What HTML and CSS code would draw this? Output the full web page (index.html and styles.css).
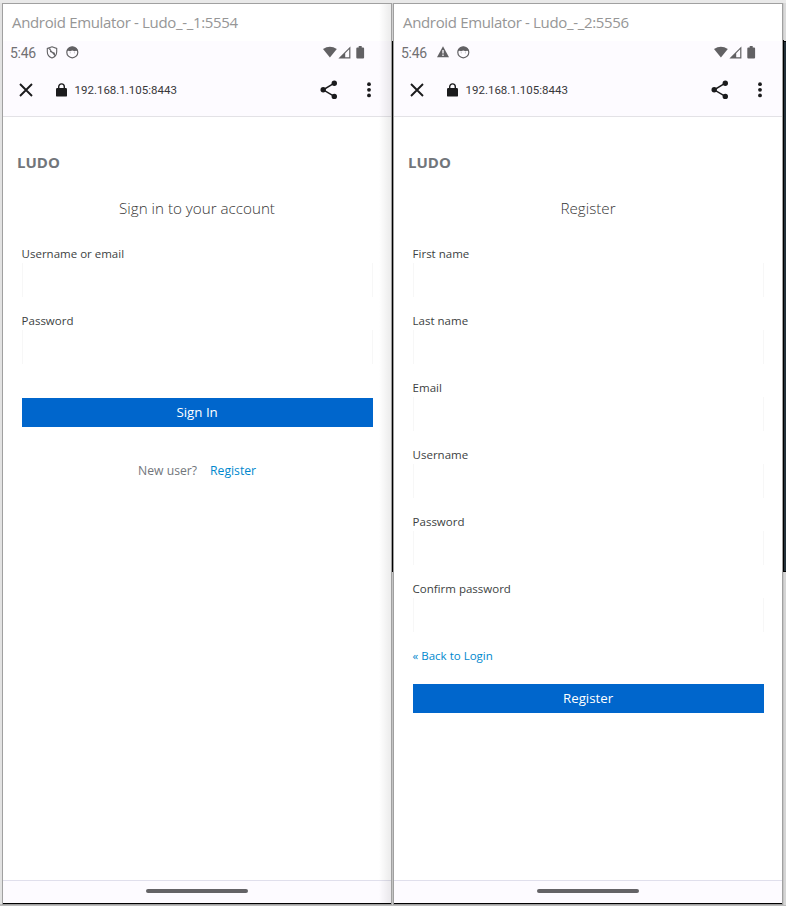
FILE: index.html
```
<!DOCTYPE html>
<html lang="en">
<head>
<meta charset="utf-8">
<title>Android Emulators</title>
<link rel="stylesheet" href="styles.css">
</head>
<body>
<svg width="0" height="0" class="defs" aria-hidden="true">
  <symbol id="close" viewBox="0 0 14 14"><path d="M1 1L13 13M13 1L1 13" stroke="#1b1b1d" stroke-width="1.9" fill="none"/></symbol>
  <symbol id="lock" viewBox="0 0 11 14"><path d="M2.7 6V3.7a2.8 2.8 0 0 1 5.600 0V6" fill="none" stroke="#1b1b1d" stroke-width="1.4"/><rect y="5" width="11" height="8.6" rx="1.2" fill="#1b1b1d"/></symbol>
  <symbol id="share" viewBox="0 0 18 20"><path d="M14.3 3.2L3.2 9.8l11.1 6.6" fill="none" stroke="#1b1b1d" stroke-width="1.5"/><circle cx="14.3" cy="3.2" r="2.7" fill="#1b1b1d"/><circle cx="3.2" cy="9.8" r="2.7" fill="#1b1b1d"/><circle cx="14.3" cy="16.4" r="2.7" fill="#1b1b1d"/></symbol>
  <symbol id="more" viewBox="0 0 4 16"><circle cx="2" cy="2.2" r="1.9" fill="#1b1b1d"/><circle cx="2" cy="7.8" r="1.9" fill="#1b1b1d"/><circle cx="2" cy="13.4" r="1.9" fill="#1b1b1d"/></symbol>
  <symbol id="signals" viewBox="0 0 42 14"><g fill="#626164"><path d="M0 3Q6.9-1.7 13.8 3L6.9 11.400z"/><path d="M15.400 12.400L27.400.4v12zM22.200 11.200h4V3.300l-4 4z" fill-rule="evenodd"/><path d="M35.700 1.500V0h3v1.500h1.400a1 1 0 0 1 1 1v8.900a1 1 0 0 1-1 1h-5.800a1 1 0 0 1-1-1V2.500a1 1 0 0 1 1-1z"/></g></symbol>
  <symbol id="shield" viewBox="0 0 12 13"><path d="M6 .8l4.700 1.600v3.300c0 3-1.900 5.300-4.700 6.300-2.800-1-4.700-3.300-4.700-6.300V2.400zM2.600 2L9.300 10M4 2.500L4.600 5.500L8.300 7.200L8.600 9.500" fill="none" stroke="#626164" stroke-width="1.100"/></symbol>
  <symbol id="warning" viewBox="0 0 12 12"><path d="M6 .3L12 11.300H0z" fill="#626164"/><path d="M6 4v3.500M6 8.600v1.400" stroke="#fdfbff" stroke-width="1.300"/></symbol>
  <symbol id="face" viewBox="0 0 13 13"><circle cx="6.300" cy="6.300" r="5.500" fill="none" stroke="#626164" stroke-width="1.200"/><path d="M.7 5.200C1.500-.9 11.100-.9 11.900 5.200L10 4.700 8.600 5.200 6.300 4.500 4 5.200 2.600 4.700z" fill="#626164"/><circle cx="4.200" cy="6.800" r=".5" fill="#a09fa3"/><circle cx="8.400" cy="6.800" r=".5" fill="#a09fa3"/></symbol>
</svg>
<main class="desktop">
  <section class="window shaded">
    <header class="titlebar"><span class="caption">Android Emulator - Ludo_-_1:5554</span></header>
    <div class="chrome">
      <div class="status"><span class="time">5:46</span><svg class="shield"><use href="#shield"/></svg><svg class="face"><use href="#face"/></svg><svg class="signals"><use href="#signals"/></svg></div>
      <div class="toolbar"><svg class="close"><use href="#close"/></svg><svg class="lock"><use href="#lock"/></svg><span class="url">192.168.1.105:8443</span><svg class="share"><use href="#share"/></svg><svg class="more"><use href="#more"/></svg></div>
    </div>
    <div class="page">
      <div class="brand"><span>LUDO</span></div>
      <h1 class="heading">Sign in to your account</h1>
      <form class="form">
        <div class="field"><label for="l1">Username or email</label><input id="l1"></div>
        <div class="field"><label for="l2">Password</label><input id="l2" type="password"></div>
        <button class="submit login" type="button">Sign In</button>
        <p class="signup"><span>New user?</span><a href="#">Register</a></p>
      </form>
    </div>
    <footer class="nav"><div class="handle"></div></footer>
  </section>
  <div class="gap"></div>
  <section class="window">
    <header class="titlebar"><span class="caption">Android Emulator - Ludo_-_2:5556</span></header>
    <div class="chrome">
      <div class="status"><span class="time">5:46</span><svg class="warning"><use href="#warning"/></svg><svg class="face"><use href="#face"/></svg><svg class="signals"><use href="#signals"/></svg></div>
      <div class="toolbar"><svg class="close"><use href="#close"/></svg><svg class="lock"><use href="#lock"/></svg><span class="url">192.168.1.105:8443</span><svg class="share"><use href="#share"/></svg><svg class="more"><use href="#more"/></svg></div>
    </div>
    <div class="page">
      <div class="brand"><span>LUDO</span></div>
      <h1 class="heading">Register</h1>
      <form class="form">
        <div class="field"><label for="r1">First name</label><input id="r1"></div>
        <div class="field"><label for="r2">Last name</label><input id="r2"></div>
        <div class="field"><label for="r3">Email</label><input id="r3"></div>
        <div class="field"><label for="r4">Username</label><input id="r4"></div>
        <div class="field"><label for="r5">Password</label><input id="r5" type="password"></div>
        <div class="field"><label for="r6">Confirm password</label><input id="r6" type="password"></div>
        <a class="back" href="#">« Back to Login</a>
        <button class="submit" type="button">Register</button>
      </form>
    </div>
    <footer class="nav"><div class="handle"></div></footer>
  </section>
  <div class="edge"></div>
</main>
</body>
</html>
```
FILE: styles.css
```
* { box-sizing: border-box; }
body { margin: 0; width: 786px; height: 906px; overflow: hidden; background: #e5e5e5; font-family: "Open Sans", sans-serif; }
.defs { position: absolute; }
svg { display: block; flex: none; }
.desktop { display: flex; height: 906px; padding: 3px 0 1px 2px; background: linear-gradient(#e9e9e9 0 3px, #e2e2e2 3px 904px, #bcbcbc 904px); }
.window { display: flex; flex-direction: column; width: 390px; height: 902px; flex: none; border: 1px solid #a0a0a0; background: #fff; }
.shaded { position: relative; }
.shaded::after { content: ""; position: absolute; top: 0; right: 0; width: 12px; height: 899px; background: linear-gradient(90deg, transparent, rgba(0,0,0,.08)); }
.gap { width: 1px; height: 902px; flex: none; background: linear-gradient(#d0d0d0 0 38px, #000 38px 569px, #c4c4c4 569px); }
.edge { flex: 1; height: 902px; background: linear-gradient(#dadada 0 38px, #000 38px 39px, #24313a 39px 568px, #000 568px 569px, #d5d5d5 569px); border: 0 solid; border-left-width: 1px; border-image: linear-gradient(#ccc 0 38px, #000 38px 569px, #c5c5c5 569px) 1; }
.titlebar { height: 37px; flex: none; padding: 7px 0 0 9px; font-size: 15px; line-height: 22px; color: #969696; white-space: nowrap; }
.caption { letter-spacing: -.34px; }
.chrome { height: 76px; flex: none; background: #fdfbff; border-bottom: 1px solid #e3e2e6; }
.status { display: flex; align-items: center; height: 22px; padding-left: 7px; font: 14px/22px Roboto, sans-serif; color: #717073; }
.time { width: 36px; padding-top: 1px; letter-spacing: -.3px; }
.shield { width: 12px; height: 13px; }
.warning { width: 12px; height: 12px; }
.face { width: 13px; height: 13px; margin-left: 8px; }
.signals { width: 42px; height: 14px; margin-left: 244px; margin-top: 1px; }
.toolbar { display: flex; align-items: center; height: 53px; padding-left: 15.5px; }
.close { width: 14px; height: 14px; }
.lock { width: 11px; height: 14px; margin-left: 23px; }
.url { width: 253px; padding: 1px 0 0 8px; font: 11.5px/20px Roboto, sans-serif; color: #38373a; }
.share { width: 18px; height: 20px; }
.more { width: 4px; height: 16px; margin-left: 29.5px; }
.page { height: 763px; flex: none; }
.brand { height: 92px; padding: 35px 0 0 14px; font-size: 15px; font-weight: 700; line-height: 20px; color: #72767b; }
.heading { margin: -13px 0 0; height: 46px; font-size: 15.2px; font-weight: 300; line-height: 24px; text-align: center; color: #363636; }
.form { display: flex; flex-direction: column; width: 351px; margin-left: 18.6px; }
.field { height: 67px; flex: none; padding-top: 3px; }
label { display: block; height: 18px; font-size: 11.5px; line-height: 18px; color: #3c3f42; }
input { display: block; width: 351px; height: 34px; border: solid #f7f7f7; border-width: 0 1px; padding: 0 8px; background: none; outline: 0; }
a { color: #0088ce; text-decoration: none; }
.submit { width: 351px; height: 29px; flex: none; padding: 0; border: 0; background: #06c; color: #fff; font: 13.3px/29px "Open Sans", sans-serif; }
.login { margin-top: 22px; }
.signup { display: flex; justify-content: center; gap: 13px; margin: 35px 0 0; font-size: 12.2px; line-height: 18px; color: #72767b; }
.back { height: 40.4px; padding-top: 3px; font-size: 11.5px; line-height: 18px; }
.nav { display: flex; justify-content: center; height: 24px; flex: none; padding-top: 8px; border-top: 1px solid #e0dfec; border-bottom: 1px solid #000; background: #fdfbff; }
.handle { width: 102px; height: 4px; border-radius: 2px; background: #646366; }
```
